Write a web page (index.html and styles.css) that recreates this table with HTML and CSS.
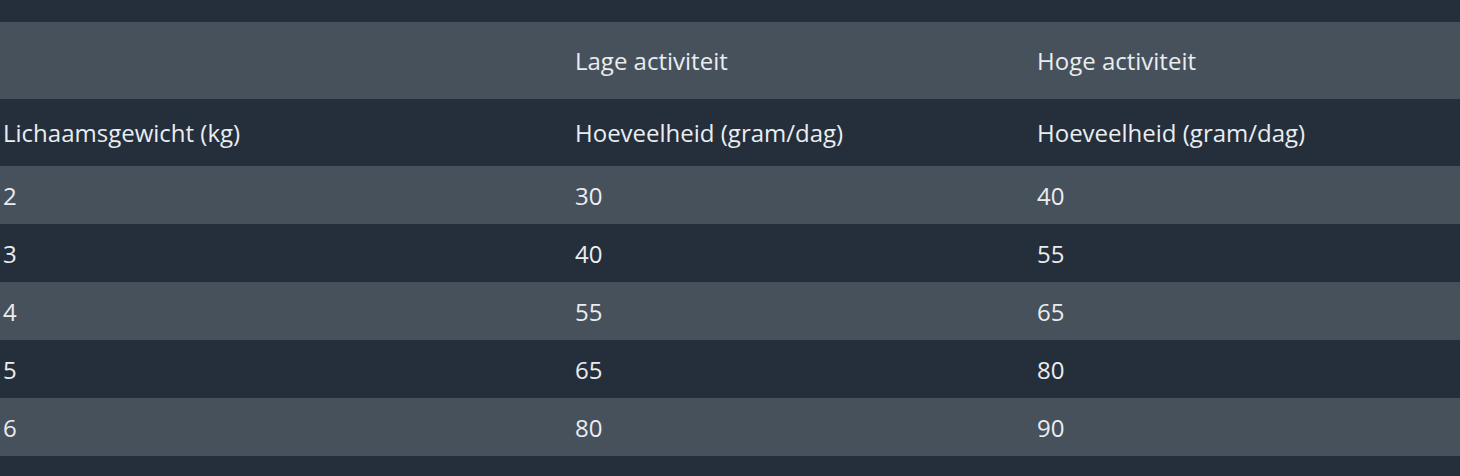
FILE: index.html
```html
<!DOCTYPE html>
<html lang="nl">
<head>
<meta charset="utf-8">
<title>Voedingstabel</title>
<link rel="stylesheet" href="styles.css">
</head>
<body>
<table class="feed-table">
  <thead>
    <tr class="row light head-top">
      <th></th>
      <th>Lage activiteit</th>
      <th>Hoge activiteit</th>
    </tr>
    <tr class="row dark head-sub">
      <th>Lichaamsgewicht (kg)</th>
      <th>Hoeveelheid (gram/dag)</th>
      <th>Hoeveelheid (gram/dag)</th>
    </tr>
  </thead>
  <tbody>
    <tr class="row light"><td>2</td><td>30</td><td>40</td></tr>
    <tr class="row dark"><td>3</td><td>40</td><td>55</td></tr>
    <tr class="row light"><td>4</td><td>55</td><td>65</td></tr>
    <tr class="row dark"><td>5</td><td>65</td><td>80</td></tr>
    <tr class="row light"><td>6</td><td>80</td><td>90</td></tr>
  </tbody>
</table>
</body>
</html>
```

FILE: styles.css
```css
html, body {
  margin: 0;
  padding: 0;
  background: #252f3c;
  height: 100%;
}

body {
  padding-top: 22px;
  font-family: "Open Sans", "Noto Sans", sans-serif;
  color: #e9edf0;
  box-sizing: border-box;
}

.feed-table {
  width: 1460px;
  border-collapse: collapse;
  table-layout: fixed;
}

.feed-table th,
.feed-table td {
  font-weight: 400;
  font-size: 24px;
  text-align: left;
  padding: 0 0 0 3px;
  vertical-align: middle;
  white-space: nowrap;
}

.feed-table th:nth-child(1),
.feed-table td:nth-child(1) { width: 569px; }
.feed-table th:nth-child(2),
.feed-table td:nth-child(2) { width: 459px; }

.row.light { background: #47515c; }
.row.dark { background: #252f3c; }

.head-top { height: 77px; }
.head-sub { height: 67px; }
tbody .row { height: 58px; }
```
